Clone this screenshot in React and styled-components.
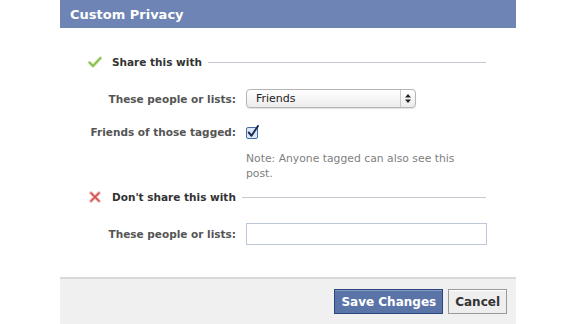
import React from "react";
import styled, { createGlobalStyle } from "styled-components";

const GlobalStyle = createGlobalStyle`
  html, body {
    margin: 0;
    padding: 0;
    background: #fff;
  }
  body {
    font-family: "DejaVu Sans", "Liberation Sans", sans-serif;
  }
`;

const Dialog = styled.div`
  width: 456px;
  margin-left: 60px;
  display: flex;
  flex-direction: column;
  height: 324px;
`;

const Header = styled.div`
  background: #6d84b4;
  height: 28px;
  display: flex;
  align-items: center;
  padding-left: 10px;
  color: #fff;
  font-weight: bold;
  font-size: 13px;
`;

const Body = styled.div`
  flex: 1;
  padding: 24px 30px 0 28px;
`;

const SectionTitle = styled.div`
  display: flex;
  align-items: center;
  gap: 10px;
  height: 20px;
  margin-top: ${(p) => p.$top || 0}px;
  font-size: 10.5px;
  font-weight: bold;
  color: #333;
  &::after {
    content: "";
    flex: 1;
    height: 1px;
    background: #c4c8d0;
    margin-left: -4px;
  }
`;

const IconBox = styled.span`
  width: 14px;
  display: flex;
  justify-content: center;
`;

const Row = styled.div`
  display: grid;
  grid-template-columns: 178px 1fr;
  column-gap: 10px;
  align-items: center;
  margin-left: -30px;
  margin-top: ${(p) => p.$top || 0}px;
`;

const Label = styled.label`
  text-align: right;
  white-space: nowrap;
  font-size: 10.5px;
  line-height: 14px;
  font-weight: bold;
  color: #555;
`;

const Select = styled.div`
  width: 168px;
  height: 17px;
  border: 1px solid #b5b5b5;
  border-radius: 4px;
  background: linear-gradient(#ffffff, #ececec);
  display: flex;
  align-items: center;
  font-size: 11px;
  color: #222;
  box-shadow: 0 1px 1px rgba(0, 0, 0, 0.12);
`;

const SelectText = styled.span`
  flex: 1;
  padding-left: 9px;
`;

const SelectArrows = styled.span`
  width: 14px;
  height: 100%;
  border-left: 1px solid #c9c9c9;
  display: flex;
  align-items: center;
  justify-content: center;
`;

const Note = styled.div`
  margin-left: 158px;
  margin-top: 12px;
  width: 222px;
  font-size: 10.8px;
  line-height: 15px;
  color: #808080;
`;

const TextInput = styled.div`
  width: 239px;
  height: 20px;
  border: 1px solid #bdc7d8;
`;

const Footer = styled.div`
  height: 47px;
  border-top: 2px solid #d9d9d9;
  background: #f0f0f0;
  display: flex;
  justify-content: flex-end;
  align-items: flex-start;
  padding: 10px 9px 0 0;
  box-sizing: border-box;
  gap: 5px;
`;

const Button = styled.button`
  height: 25px;
  padding: 0 6px;
  font-family: "DejaVu Sans", "Liberation Sans", sans-serif;
  font-size: 12px;
  font-weight: bold;
  border: 1px solid ${(p) => (p.$primary ? "#29447e" : "#999")};
  background: ${(p) => (p.$primary ? "#5b74a8" : "#eeeeee")};
  color: ${(p) => (p.$primary ? "#fff" : "#333")};
  box-shadow: inset 0 1px 0 ${(p) => (p.$primary ? "#8a9cc2" : "#fff")};
  cursor: pointer;
`;

const CheckIcon = () => (
  <svg width="14" height="12" viewBox="0 0 14 12">
    <path d="M1.5 6.5 L5 10 L12.5 2" fill="none" stroke="#cfe6ae" strokeWidth="3.4" strokeLinecap="round" strokeLinejoin="round" />
    <path d="M1.5 6.5 L5 10 L12.5 2" fill="none" stroke="#7bb83e" strokeWidth="1.5" strokeLinecap="round" strokeLinejoin="round" />
  </svg>
);

const CrossIcon = () => (
  <svg width="12" height="12" viewBox="0 0 12 12">
    <path d="M2 2 L10 10 M10 2 L2 10" fill="none" stroke="#f2c2c2" strokeWidth="3.6" strokeLinecap="round" />
    <path d="M2 2 L10 10 M10 2 L2 10" fill="none" stroke="#d44a4a" strokeWidth="1.6" strokeLinecap="round" />
  </svg>
);

const Checkbox = () => (
  <svg width="14" height="14" viewBox="0 0 14 14">
    <rect x="0.5" y="2.5" width="11" height="11" rx="1.5" fill="#dde6f5" stroke="#4a6ea9" />
    <path d="M2.8 7.5 L5.5 10.8 L12 1" fill="none" stroke="#1d2c55" strokeWidth="2" strokeLinecap="round" strokeLinejoin="round" />
  </svg>
);

const Arrows = () => (
  <svg width="6" height="9" viewBox="0 0 6 9">
    <path d="M3 0 L6 3.5 L0 3.5 Z M3 9 L6 5.5 L0 5.5 Z" fill="#222" />
  </svg>
);

export default function App() {
  return (
    <>
      <GlobalStyle />
      <Dialog>
        <Header>Custom Privacy</Header>
        <Body>
          <SectionTitle>
            <IconBox>
              <CheckIcon />
            </IconBox>
            Share this with
          </SectionTitle>
          <Row $top={17}>
            <Label>These people or lists:</Label>
            <Select>
              <SelectText>Friends</SelectText>
              <SelectArrows>
                <Arrows />
              </SelectArrows>
            </Select>
          </Row>
          <Row $top={17}>
            <Label>Friends of those tagged:</Label>
            <Checkbox />
          </Row>
          <Note>Note: Anyone tagged can also see this post.</Note>
          <SectionTitle $top={6}>
            <IconBox>
              <CrossIcon />
            </IconBox>
            Don't share this with
          </SectionTitle>
          <Row $top={16}>
            <Label>These people or lists:</Label>
            <TextInput />
          </Row>
        </Body>
        <Footer>
          <Button $primary>Save Changes</Button>
          <Button>Cancel</Button>
        </Footer>
      </Dialog>
    </>
  );
}
